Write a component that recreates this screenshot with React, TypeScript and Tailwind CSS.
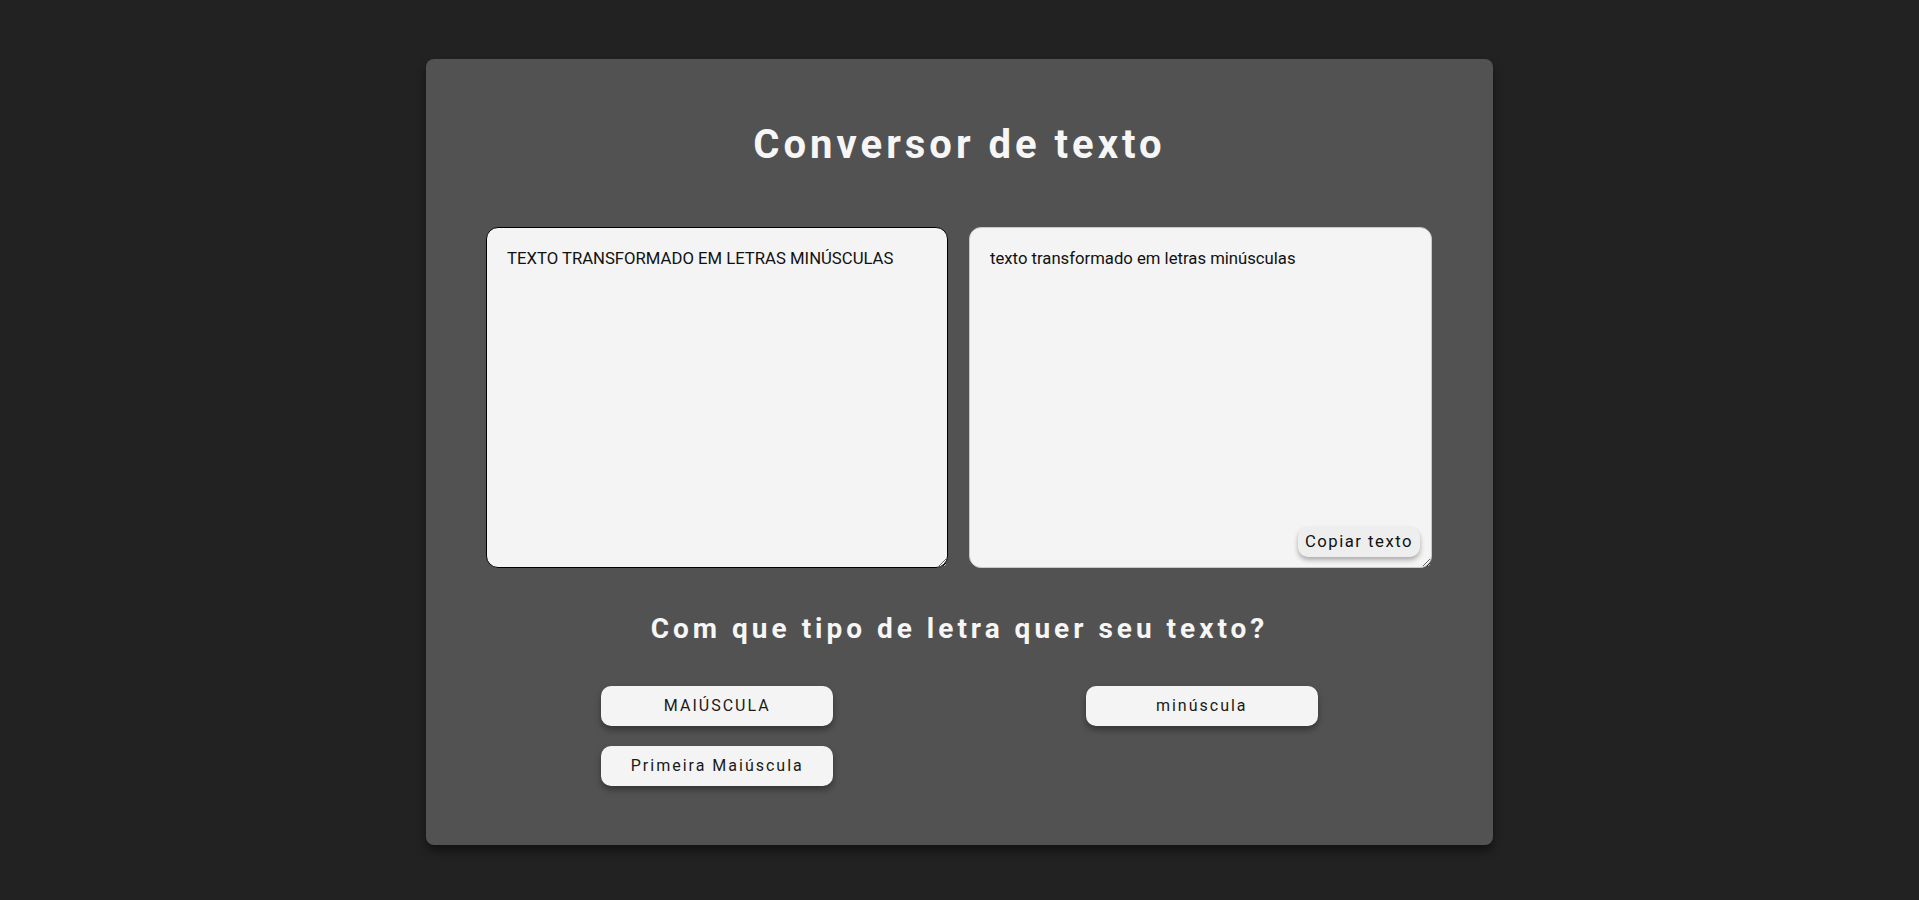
import React from "react";

export default function App() {
  const font = { fontFamily: "Roboto, 'Noto Sans', sans-serif" };
  return (
    <div className="min-h-[900px] w-full bg-[#222222] pt-[59px]" style={font}>
      <div className="mx-auto flex w-[1067px] flex-col items-center rounded-lg bg-[#525252] px-[60px] pt-[62px] pb-[59px] shadow-[0_6px_10px_rgba(0,0,0,0.45)]">
        <h1 className="text-[40px] leading-[48px] font-bold tracking-[4px] text-[#f6f6f6]">
          Conversor de texto
        </h1>
        <div className="mt-[58px] flex w-full gap-[21px]">
          <textarea
            readOnly
            defaultValue="TEXTO TRANSFORMADO EM LETRAS MINÚSCULAS"
            className="h-[341px] w-[462px] rounded-[12px] border border-black bg-[#f4f4f4] px-[20px] pt-[21px] pb-[20px] text-[16.7px] leading-[20px] text-[#111] outline-none"
            style={font}
          />
          <div className="relative h-[341px] w-[463px]">
            <textarea
              readOnly
              defaultValue="texto transformado em letras minúsculas"
              className="h-full w-full rounded-[12px] border border-[#c8c8c8] bg-[#f4f4f4] px-[20px] pt-[21px] pb-[20px] text-[16.7px] leading-[20px] text-[#111] outline-none"
              style={font}
            />
            <button
              className="absolute right-[12px] bottom-[11px] h-[30px] rounded-[10px] bg-[#eeeeee] px-[7px] text-[16.7px] tracking-[1.5px] text-[#111] shadow-[0_3px_5px_rgba(0,0,0,0.3)]"
              style={font}
            >
              Copiar texto
            </button>
          </div>
        </div>
        <h2 className="mt-[44px] text-[28px] leading-[34px] font-bold tracking-[4px] text-[#f6f6f6]">
          Com que tipo de letra quer seu texto?
        </h2>
        <div className="mt-[40px] grid w-[969px] grid-cols-2 justify-items-center gap-y-[20px]">
          {["MAIÚSCULA", "minúscula", "Primeira Maiúscula"].map((t) => (
            <button
              key={t}
              className="h-[40px] w-[232px] rounded-[10px] bg-[#f4f4f4] text-[16px] tracking-[2px] text-[#1a1a1a] shadow-[0_4px_6px_rgba(0,0,0,0.35)]"
              style={font}
            >
              {t}
            </button>
          ))}
        </div>
      </div>
    </div>
  );
}
